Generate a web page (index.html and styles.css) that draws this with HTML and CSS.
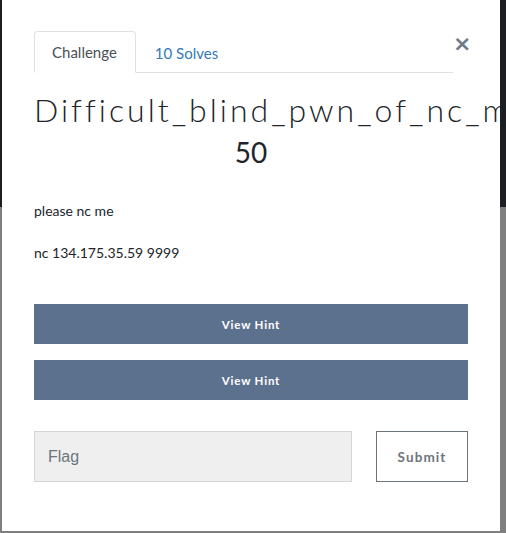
FILE: index.html
```html
<!DOCTYPE html>
<html>
<head>
<meta charset="utf-8">
<link rel="stylesheet" href="styles.css">
</head>
<body>
<div class="backdrop">
  <div class="modal">
    <div class="tabs-row">
      <ul class="nav">
        <li class="tab active">Challenge</li>
        <li class="tab link">10 Solves</li>
      </ul>
      <button class="close" type="button">×</button>
    </div>
    <h2 class="title">Difficult_blind_pwn_of_nc_me</h2>
    <h3 class="points">50</h3>
    <div class="desc">
      <p>please nc me</p>
      <p>nc 134.175.35.59 9999</p>
    </div>
    <div class="hints">
      <button class="hint" type="button">View Hint</button>
      <button class="hint" type="button">View Hint</button>
    </div>
    <div class="submit-row">
      <input class="flag" type="text" placeholder="Flag">
      <button class="submit" type="button">Submit</button>
    </div>
  </div>
</div>
</body>
</html>
```
FILE: styles.css
```css
* { box-sizing: border-box; }
html, body { margin: 0; padding: 0; }
body {
  width: 506px;
  height: 533px;
  overflow: hidden;
  background: linear-gradient(#1b1f23 0, #1b1f23 207px, #7f7f7f 207px);
  font-family: Lato, "Noto Sans", sans-serif;
  color: #212529;
}
.backdrop {
  padding: 0 6px 2px 2px;
  height: 533px;
}
.modal {
  background: #fff;
  width: 498px;
  height: 531px;
  padding: 31px 32px 0 32px;
  overflow: hidden;
}
.tabs-row {
  display: flex;
  align-items: flex-start;
  width: 434px;
}
.nav {
  list-style: none;
  margin: 0;
  padding: 0;
  display: flex;
  width: 419px;
  border-bottom: 1px solid #dee2e6;
  height: 42px;
}
.tab {
  height: 42px;
  padding: 0 18px 0 17px;
  font-size: 15px;
  line-height: 42px;
  border: 1px solid transparent;
  border-radius: 4px 4px 0 0;
}
.tab.active {
  color: #495057;
  border-color: #dee2e6 #dee2e6 #fff;
  background: #fff;
  line-height: 40px;
}
.tab.link {
  color: #337ab7;
  padding-left: 18px;
}
.close {
  margin-left: auto;
  margin-top: 2px;
  border: 0;
  background: none;
  padding: 0;
  font-family: "DejaVu Sans", sans-serif;
  font-size: 22px;
  line-height: 22px;
  color: #6c7a8a;
  font-weight: bold;
  width: 15px;
  text-align: center;
}
.title {
  margin: 17px 0 0 0;
  font-weight: 300;
  font-size: 32px;
  line-height: 40px;
  letter-spacing: 3px;
  white-space: nowrap;
  color: #212529;
}
.points {
  margin: 5px 0 0 0;
  text-align: center;
  font-weight: 400;
  font-size: 28px;
  line-height: 34px;
}
.desc {
  margin-top: 32px;
  font-size: 14px;
  line-height: 20px;
}
.desc p { margin: 0 0 22px 0; }
.hints {
  margin-top: 41px;
  display: flex;
  flex-direction: column;
  gap: 16px;
}
.hint {
  height: 40px;
  width: 434px;
  border: 0;
  background: #5c718e;
  color: #fff;
  font-family: Lato, sans-serif;
  font-weight: 700;
  font-size: 11.5px;
  letter-spacing: 0.8px;
}
.submit-row {
  margin-top: 31px;
  display: flex;
  gap: 24px;
}
.flag {
  width: 318px;
  height: 51px;
  background: #efefef;
  border: 1px solid #d4d6da;
  padding: 0 13px;
  font-family: "Liberation Sans", Arial, sans-serif;
  font-size: 16px;
}
.flag::placeholder { color: #6c757d; }
.submit {
  width: 92px;
  height: 51px;
  background: #fff;
  border: 1px solid #6c757d;
  color: #6c757d;
  font-family: Lato, sans-serif;
  font-weight: 700;
  font-size: 13.5px;
  letter-spacing: 1.1px;
}
```
